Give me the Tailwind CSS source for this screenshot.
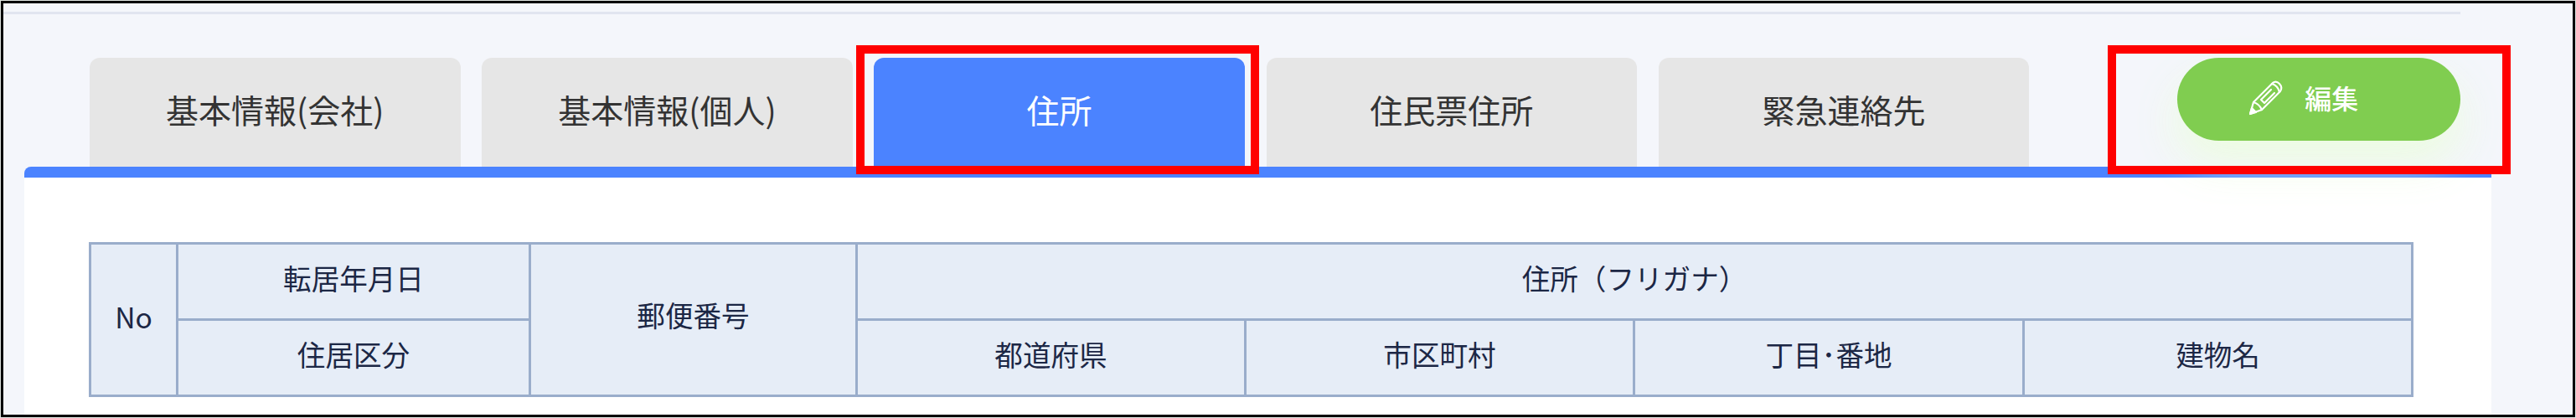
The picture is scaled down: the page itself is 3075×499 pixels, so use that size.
<!DOCTYPE html>
<html lang="ja">
<head>
    <meta charset="UTF-8">
    <meta name="viewport" content="width=device-width, initial-scale=1.0">
    <title>住所</title>
    <script src="https://cdn.jsdelivr.net/npm/@tailwindcss/browser@4"></script>
</head>
<body class="w-[3075px] h-[499px] overflow-hidden bg-[#dfe4e0] p-px font-['Noto_Sans_CJK_JP',sans-serif]">

    <div class="relative w-[3073px] h-[497px] border-3 border-black bg-[#f4f6fb] overflow-hidden flex flex-col">

        <div class="w-[2933px] h-[13px] shrink-0 border-b-3 border-[#e1e5f0]"></div>

        <!-- Tabs -->
        <div class="shrink-0 mt-[52px] h-[130px] pl-[103px] flex items-start">
            <nav class="flex gap-[25.7px] text-[39px] leading-none text-[#333333]">
                <a class="w-[442.5px] h-[130px] pb-[7px] rounded-t-xl bg-[#e6e6e6] flex items-center justify-center">基本情報(会社)</a>
                <a class="w-[442.5px] h-[130px] pb-[7px] rounded-t-xl bg-[#e6e6e6] flex items-center justify-center">基本情報(個人)</a>
                <a class="w-[442.5px] h-[130px] pb-[7px] rounded-t-xl bg-[#4b83ff] text-white flex items-center justify-center">住所</a>
                <a class="w-[442.5px] h-[130px] pb-[7px] rounded-t-xl bg-[#e6e6e6] flex items-center justify-center">住民票住所</a>
                <a class="w-[442.5px] h-[130px] pb-[7px] rounded-t-xl bg-[#e6e6e6] flex items-center justify-center">緊急連絡先</a>
            </nav>
            <button class="relative z-10 ml-[177px] w-[338px] h-[99px] pl-[85px] rounded-full bg-[#80cd50] shadow-[0_26px_52px_rgba(235,253,222,0.9)] text-white text-[32px] leading-none font-medium flex items-center">
                <svg class="w-[42px] h-[42px] -mt-1" viewBox="0 0 42 42" fill="none" stroke="currentColor" stroke-width="2.2" stroke-linejoin="round" stroke-linecap="round">
                    <path d="M2 40 L6 26 L29 3 Q33 0 37 4 Q41 8 38 13 L16 35 Z"/>
                    <path d="M6 26 Q13 28 16 35 M28 4 Q35 6 37 14"/>
                    <path d="M15 23 L27 11 M19 27 L31 15 M15 23 L19 27"/>
                    <path d="M2 40 L4 33 L9 38 Z" fill="currentColor"/>
                </svg>
                <span class="ml-[25px] pb-[6px]">編集</span>
            </button>
        </div>

        <!-- Panel -->
        <div class="ml-[25px] w-[2945px] grow rounded-t-lg border-t-[13px] border-[#4b83ff] bg-white pt-[77px] pl-[77px]">
            <table class="table-fixed border-collapse w-[2772px] text-[33.6px] leading-none text-[#1c2745] bg-[#e6edf7]">
                <colgroup>
                    <col class="w-[104px]">
                    <col class="w-[421px]">
                    <col class="w-[390px]">
                    <col class="w-[464px]">
                    <col class="w-[464px]">
                    <col class="w-[465px]">
                    <col class="w-[464px]">
                </colgroup>
                <tr class="h-[91px]">
                    <th rowspan="2" class="border-3 border-[#9aadcb] p-0 pb-[7px] font-normal">No</th>
                    <th class="border-3 border-[#9aadcb] p-0 pb-[8px] font-normal">転居年月日</th>
                    <th rowspan="2" class="border-3 border-[#9aadcb] p-0 pb-[11px] font-normal">郵便番号</th>
                    <th colspan="4" class="border-3 border-[#9aadcb] p-0 pb-[8px] font-normal">住所（フリガナ）</th>
                </tr>
                <tr class="h-[91px]">
                    <th class="border-3 border-[#9aadcb] p-0 pb-[8px] font-normal">住居区分</th>
                    <th class="border-3 border-[#9aadcb] p-0 pb-[8px] font-normal">都道府県</th>
                    <th class="border-3 border-[#9aadcb] p-0 pb-[8px] font-normal">市区町村</th>
                    <th class="border-3 border-[#9aadcb] p-0 pb-[8px] font-normal">丁目･番地</th>
                    <th class="border-3 border-[#9aadcb] p-0 pb-[8px] font-normal">建物名</th>
                </tr>
            </table>
        </div>

        <!-- Highlight frames -->
        <div class="absolute left-[1018px] top-[50px] w-[481px] h-[154px] border-10 border-[#ff0000] z-20"></div>
        <div class="absolute left-[2512px] top-[50px] w-[481px] h-[154px] border-10 border-[#ff0000] z-20"></div>
    </div>

</body>
</html>
